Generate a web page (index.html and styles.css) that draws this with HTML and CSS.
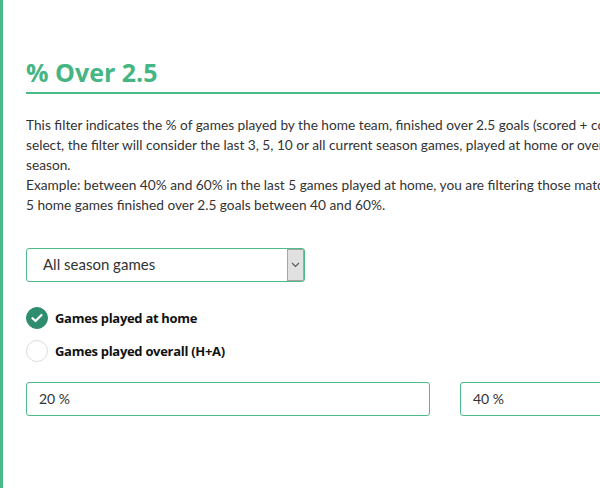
FILE: index.html
```html
<!DOCTYPE html>
<html>
<head>
<meta charset="utf-8">
<link rel="stylesheet" href="styles.css">
</head>
<body>
<div class="page">
  <div class="content">
    <h2 class="title">% Over 2.5</h2>
    <p class="desc">This filter indicates the % of games played by the home team, finished over 2.5 goals (scored + conceded). Depending on what you<br>select, the filter will consider the last 3, 5, 10 or all current season games, played at home or overall during the current<br>season.<br>Example: between 40% and 60% in the last 5 games played at home, you are filtering those matches in which the home team's last<br>5 home games finished over 2.5 goals between 40 and 60%.</p>
    <div class="select">
      <span class="select-text">All season games</span>
      <span class="select-btn">
        <svg width="9" height="6" viewBox="0 0 9 6"><path d="M1 1 L4.5 4.5 L8 1" fill="none" stroke="#555" stroke-width="1.1"/></svg>
      </span>
    </div>
    <div class="radios">
      <label class="radio">
        <span class="dot checked">
          <svg width="12" height="10" viewBox="0 0 12 10"><path d="M1.5 5.2 L4.5 8 L10.5 2" fill="none" stroke="#fff" stroke-width="2.2" stroke-linecap="round" stroke-linejoin="round"/></svg>
        </span>
        <span class="label">Games played at home</span>
      </label>
      <label class="radio">
        <span class="dot"></span>
        <span class="label">Games played overall (H+A)</span>
      </label>
    </div>
    <div class="inputs">
      <div class="field">20 %</div>
      <div class="field">40 %</div>
    </div>
  </div>
</div>
</body>
</html>
```
FILE: styles.css
```css
html, body {
  margin: 0;
  padding: 0;
  background: #fff;
  overflow: hidden;
}
.page {
  width: 600px;
  height: 488px;
  border-left: 3px solid #4dbb89;
  box-sizing: border-box;
  overflow: hidden;
  font-family: Lato, "Liberation Sans", sans-serif;
  color: #333;
}
.content {
  width: 838px;
  padding-left: 23px;
  padding-top: 58px;
}
.title {
  margin: 0;
  font-family: "Open Sans", Lato, sans-serif;
  font-size: 25px;
  line-height: 29px;
  font-weight: 700;
  color: #46b584;
  padding-bottom: 5px;
  border-bottom: 2px solid #4dbb89;
}
.desc {
  margin: 21px 0 0;
  font-size: 13.7px;
  line-height: 20px;
  white-space: nowrap;
}
.select {
  margin-top: 33px;
  width: 279px;
  height: 34px;
  box-sizing: border-box;
  border: 1px solid #4dbb89;
  border-radius: 3px;
  display: flex;
  align-items: stretch;
}
.select-text {
  flex: 1;
  padding-left: 16px;
  font-size: 15px;
  line-height: 31px;
  color: #333;
}
.select-btn {
  width: 15px;
  background: #e1e1e1;
  border: 1px solid #a6a6a6;
  display: flex;
  align-items: center;
  justify-content: center;
}
.radios {
  margin-top: 25px;
  display: flex;
  flex-direction: column;
  gap: 11px;
}
.radio {
  display: flex;
  align-items: center;
  gap: 7px;
}
.dot {
  width: 22px;
  height: 22px;
  border-radius: 50%;
  box-sizing: border-box;
  border: 1px solid #dcdcdc;
  background: #fff;
  display: flex;
  align-items: center;
  justify-content: center;
}
.dot.checked {
  background: #2e8c6f;
  border-color: #2e8c6f;
}
.label {
  font-family: "Open Sans", Lato, sans-serif;
  font-size: 13px;
  font-weight: 700;
  letter-spacing: -0.3px;
  line-height: 18px;
  color: #111;
}
.inputs {
  margin-top: 20px;
  display: flex;
  gap: 30px;
}
.field {
  width: 404px;
  height: 34px;
  box-sizing: border-box;
  border: 1px solid #4dbb89;
  border-radius: 3px;
  padding-left: 12px;
  font-size: 14px;
  line-height: 32px;
  color: #333;
}
```
